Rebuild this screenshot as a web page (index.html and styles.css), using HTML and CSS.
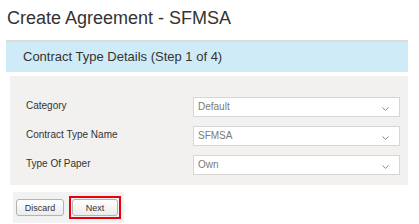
FILE: index.html
```html
<!DOCTYPE html>
<html lang="en">
  <head>
    <meta charset="UTF-8" />
    <meta name="viewport" content="width=device-width, initial-scale=1.0" />
    <title>Create Agreement - SFMSA</title>
    <link rel="stylesheet" href="styles.css">
  </head>

  <body>
    <main class="page">
      <h1 class="page-title">Create Agreement - SFMSA</h1>

      <div class="step-header">Contract Type Details (Step 1 of 4)</div>

      <form class="form-panel" id="agreementForm">
        <div class="form-row">
          <label for="category">Category</label>
          <div class="select-box" id="category">
            <span>Default</span>
            <svg class="chevron" width="7" height="4" viewBox="0 0 7 4">
              <path d="M0.5 0.5 L3.5 3.3 L6.5 0.5" fill="none" stroke="#888" stroke-width="1" />
            </svg>
          </div>
        </div>
        <div class="form-row">
          <label for="contractType">Contract Type Name</label>
          <div class="select-box" id="contractType">
            <span>SFMSA</span>
            <svg class="chevron" width="7" height="4" viewBox="0 0 7 4">
              <path d="M0.5 0.5 L3.5 3.3 L6.5 0.5" fill="none" stroke="#888" stroke-width="1" />
            </svg>
          </div>
        </div>
        <div class="form-row">
          <label for="paperType">Type Of Paper</label>
          <div class="select-box" id="paperType">
            <span>Own</span>
            <svg class="chevron" width="7" height="4" viewBox="0 0 7 4">
              <path d="M0.5 0.5 L3.5 3.3 L6.5 0.5" fill="none" stroke="#888" stroke-width="1" />
            </svg>
          </div>
        </div>
      </form>

      <div class="actions">
        <button type="button" class="btn">Discard</button>
        <span class="highlight">
          <button type="button" class="btn btn-next">Next</button>
        </span>
      </div>
    </main>
  </body>
</html>
```

FILE: styles.css
```css
* {
  padding: 0;
  margin: 0;
  box-sizing: border-box;
}

body {
  background-color: #ffffff;
  font-family: "Liberation Sans", Arial, sans-serif;
  color: #333333;
}

.page {
  width: 419px;
  padding-top: 7px;
}

.page-title {
  font-size: 18px;
  font-weight: normal;
  line-height: 22px;
  margin: 0 0 11px 7px;
  color: #333333;
}

.step-header {
  margin: 0 11px 0 6px;
  height: 32px;
  border-top: 2px solid #dcdcdc;
  background-color: #cfebf7;
  padding-left: 17px;
  font-size: 13px;
  line-height: 29px;
  color: #333333;
}

.form-panel {
  margin: 4px 11px 0 10px;
  padding: 21px 8px 10px 16px;
  background-color: #f2f1f0;
  display: flex;
  flex-direction: column;
  gap: 9px;
}

.form-row {
  display: flex;
  align-items: center;
  height: 20px;
}

.form-row label {
  width: 167px;
  font-size: 10px;
  color: #333333;
  margin-top: -4px;
}

.select-box {
  width: 207px;
  height: 20px;
  background-color: #ffffff;
  border: 1px solid #d6d6d6;
  display: flex;
  align-items: center;
  justify-content: space-between;
  padding: 0 10px 0 4px;
  font-size: 10px;
  color: #7a7a7a;
}

.select-box span {
  margin-top: -2px;
}

.chevron {
  margin-top: 3px;
}

.actions {
  margin: 7px 0 0 13px;
  width: 111px;
  height: 31px;
  background-color: #f2f2f2;
  display: flex;
  align-items: center;
  gap: 5px;
  padding-left: 3px;
}

.btn {
  height: 17px;
  width: 48px;
  border: 1px solid #b3b3b3;
  border-radius: 3px;
  background: linear-gradient(#ffffff, #ececec);
  font-family: "Liberation Sans", Arial, sans-serif;
  font-size: 9px;
  color: #333333;
  cursor: pointer;
}

.highlight {
  display: flex;
  border: 2px solid #e8000b;
  padding: 1px;
  background-color: #f2f2f2;
}

.btn-next {
  width: 46px;
}
```
